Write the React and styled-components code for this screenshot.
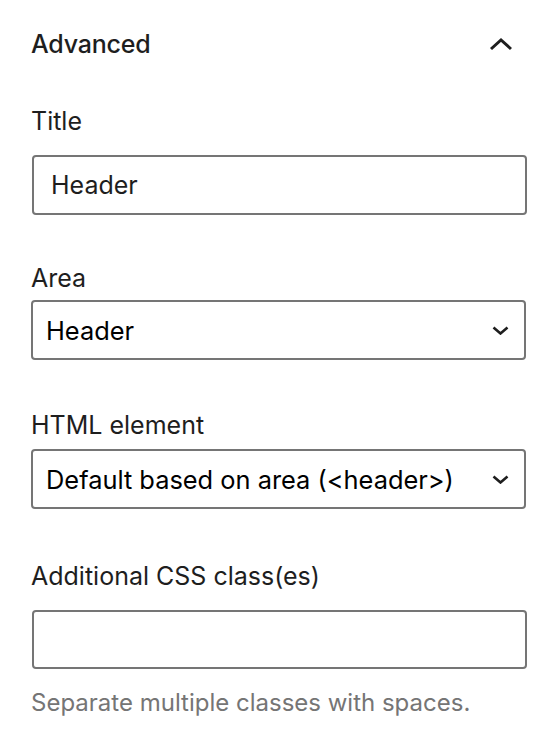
import React from 'react';
import styled, { createGlobalStyle } from 'styled-components';

const GlobalStyle = createGlobalStyle`
  html, body {
    margin: 0;
    padding: 0;
    background: #ffffff;
  }
  body {
    font-family: Inter, "Noto Sans", "Liberation Sans", sans-serif;
    color: #1e1e1e;
  }
`;

const Panel = styled.div`
  width: 538px;
  box-sizing: border-box;
  padding: 24px 11px 0 31px;
`;

const PanelHeader = styled.div`
  display: flex;
  justify-content: space-between;
  align-items: center;
  height: 40px;
  margin-bottom: 41px;
`;

const PanelTitle = styled.h2`
  margin: 0;
  font-size: 25px;
  font-weight: 500;
  letter-spacing: -0.2px;
  color: #1e1e1e;
`;

const ToggleIcon = styled.svg`
  width: 24px;
  height: 14px;
  margin-right: 14px;
`;

const Field = styled.div`
  display: flex;
  flex-direction: column;
  margin-bottom: ${(p) => p.$gap || 47}px;
`;

const Label = styled.label`
  display: block;
  font-size: 25px;
  line-height: 32px;
  color: #1e1e1e;
  margin-bottom: ${(p) => p.$space || 18}px;
`;

const TextInput = styled.div`
  box-sizing: border-box;
  height: ${(p) => p.$h || 60}px;
  width: 495px;
  margin-left: 1px;
  border: 2px solid #757575;
  border-radius: 4px;
  display: flex;
  align-items: center;
  padding: 0 17px;
  font-size: 25px;
  color: #1e1e1e;
`;

const Select = styled.div`
  box-sizing: border-box;
  height: 60px;
  width: 495px;
  border: 2px solid #757575;
  border-radius: 4px;
  display: flex;
  align-items: center;
  justify-content: space-between;
  padding: 0 15px 0 13px;
  font-size: 25.4px;
  color: #000000;
`;

const SelectArrow = styled.svg`
  width: 17px;
  height: 9px;
`;

const Help = styled.p`
  margin: 18px 0 0;
  font-size: 24px;
  line-height: 32px;
  color: #757575;
`;

const ChevronDown = () => (
  <SelectArrow viewBox="0 0 17 9" fill="none">
    <path d="M1.5 1.5 L8.5 7.5 L15.5 1.5" stroke="#1e1e1e" strokeWidth="2.6" />
  </SelectArrow>
);

const App = () => (
  <>
    <GlobalStyle />
    <Panel>
      <PanelHeader>
        <PanelTitle>Advanced</PanelTitle>
        <ToggleIcon viewBox="0 0 24 14" fill="none">
          <path d="M2 12 L12 3 L22 12" stroke="#1e1e1e" strokeWidth="3" />
        </ToggleIcon>
      </PanelHeader>

      <Field>
        <Label>Title</Label>
        <TextInput>Header</TextInput>
      </Field>

      <Field $gap={49}>
        <Label $space={6}>Area</Label>
        <Select>
          <span>Header</span>
          <ChevronDown />
        </Select>
      </Field>

      <Field $gap={51}>
        <Label $space={8}>HTML element</Label>
        <Select>
          <span>Default based on area (&lt;header&gt;)</span>
          <ChevronDown />
        </Select>
      </Field>

      <Field $gap={0}>
        <Label $space={18}>Additional CSS class(es)</Label>
        <TextInput $h={59} />
        <Help>Separate multiple classes with spaces.</Help>
      </Field>
    </Panel>
  </>
);

export default App;
